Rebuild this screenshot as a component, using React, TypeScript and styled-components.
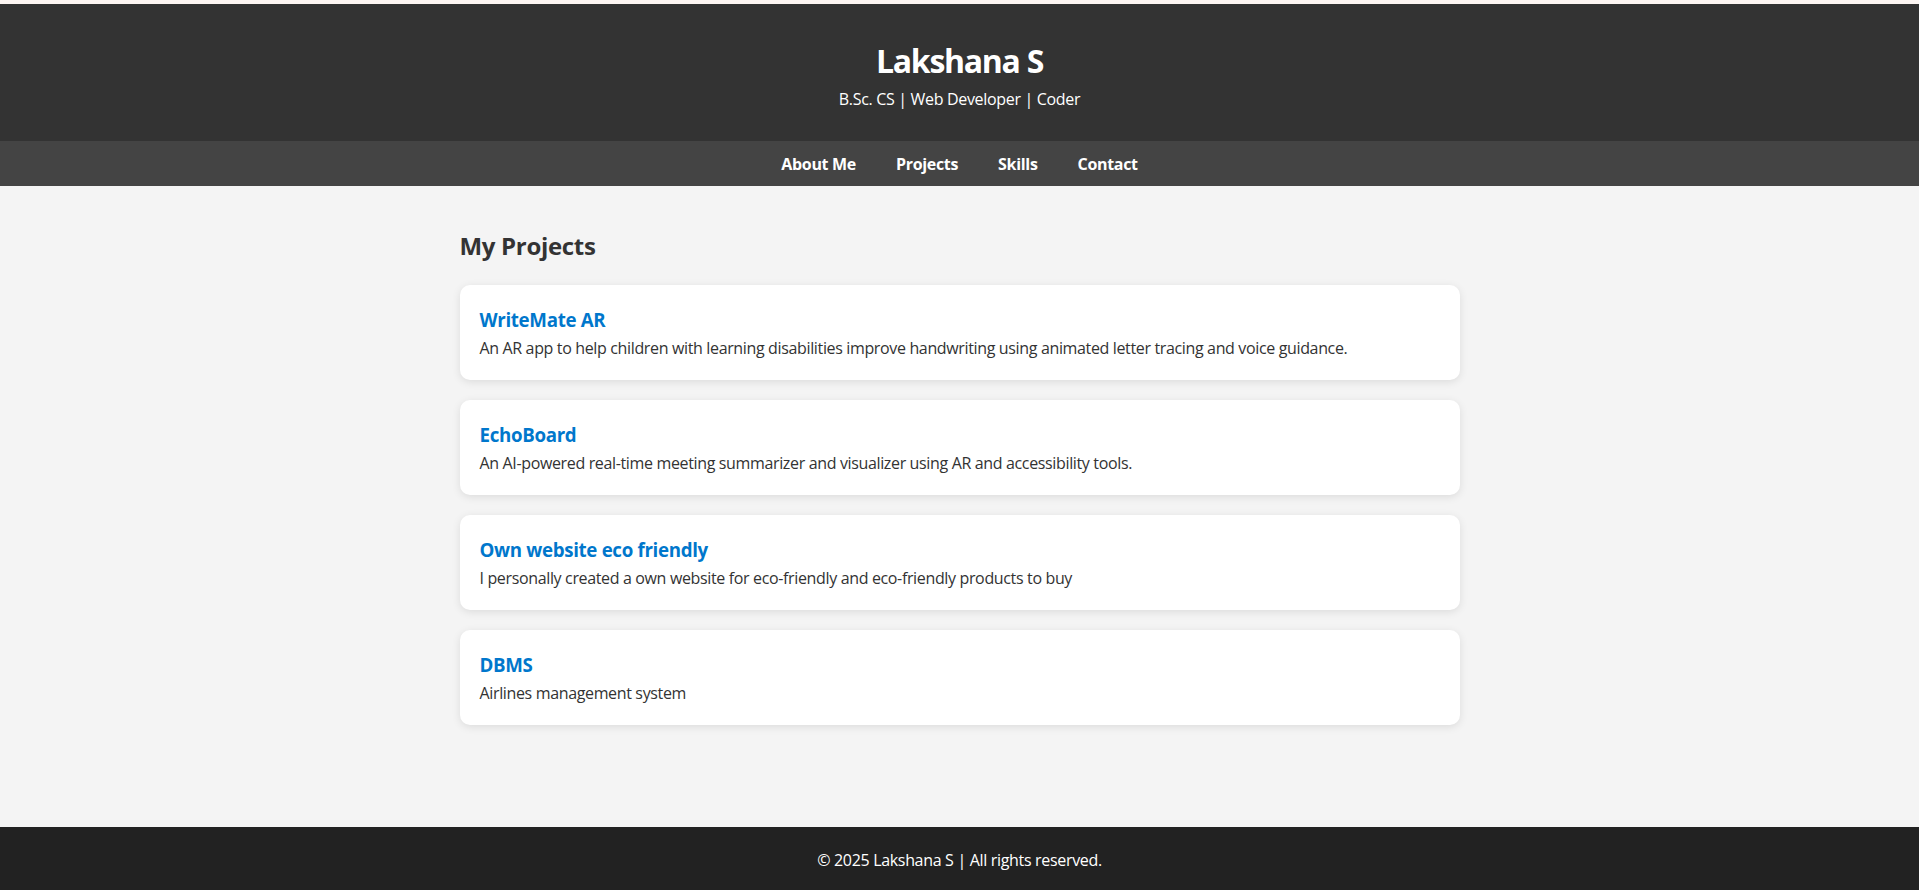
import React from "react";
import styled, { createGlobalStyle } from "styled-components";

const GlobalStyle = createGlobalStyle`
  html, body {
    margin: 0;
    padding: 0;
    background: #f4f4f4;
  }
  body {
    font-family: "Open Sans", "Noto Sans", Arial, sans-serif;
    color: #333;
    letter-spacing: -0.02em;
  }
  * { box-sizing: border-box; }
`;

const Page = styled.div`
  display: flex;
  flex-direction: column;
  min-height: 890px;
`;

const TopStrip = styled.div`
  height: 4px;
  background: #fdf6f3;
`;

const Header = styled.header`
  background: #333;
  color: #fff;
  text-align: center;
  padding: 36px 0 31px;
`;

const Name = styled.h1`
  margin: 0;
  font-size: 32px;
  line-height: 42px;
  font-weight: 700;
  letter-spacing: -0.04em;
`;

const Tagline = styled.p`
  margin: 7px 0 0;
  font-size: 16px;
  line-height: 21px;
`;

const Nav = styled.nav`
  background: #444;
  display: flex;
  justify-content: center;
  gap: 40px;
  padding: 13px 0 11px;
`;

const NavLink = styled.a`
  color: #fff;
  text-decoration: none;
  font-weight: 700;
  font-size: 16px;
  line-height: 21px;
  cursor: pointer;
`;

const Main = styled.main`
  flex: 1;
  padding: 44px 0 102px;
`;

const Container = styled.section`
  max-width: 1000px;
  margin: 0 auto;
`;

const SectionTitle = styled.h2`
  margin: 0 0 23px;
  font-size: 24px;
  line-height: 32px;
  font-weight: 700;
  color: #333;
`;

const CardList = styled.div`
  display: flex;
  flex-direction: column;
  gap: 20px;
`;

const Card = styled.article`
  background: #fff;
  border-radius: 10px;
  box-shadow: 0 2px 8px rgba(0, 0, 0, 0.1);
  padding: 22px 20px 21px;
`;

const CardTitle = styled.h3`
  margin: 0 0 6px;
  font-size: 18.72px;
  line-height: 25px;
  font-weight: 700;
  color: #0077cc;
`;

const CardText = styled.p`
  margin: 0;
  font-size: 16px;
  line-height: 21px;
  color: #333;
  letter-spacing: -0.022em;
`;

const Footer = styled.footer`
  background: #222;
  color: #fff;
  text-align: center;
  padding: 23px 0 19px;
  font-size: 16px;
  line-height: 21px;
`;

const projects = [
  {
    title: "WriteMate AR",
    text: "An AR app to help children with learning disabilities improve handwriting using animated letter tracing and voice guidance.",
  },
  {
    title: "EchoBoard",
    text: "An AI-powered real-time meeting summarizer and visualizer using AR and accessibility tools.",
  },
  {
    title: "Own website eco friendly",
    text: "I personally created a own website for eco-friendly and eco-friendly products to buy",
  },
  {
    title: "DBMS",
    text: "Airlines management system",
  },
];

export default function App() {
  return (
    <>
      <GlobalStyle />
      <Page>
        <TopStrip />
        <Header>
          <Name>Lakshana S</Name>
          <Tagline>B.Sc. CS | Web Developer | Coder</Tagline>
        </Header>
        <Nav>
          <NavLink>About Me</NavLink>
          <NavLink>Projects</NavLink>
          <NavLink>Skills</NavLink>
          <NavLink>Contact</NavLink>
        </Nav>
        <Main>
          <Container>
            <SectionTitle>My Projects</SectionTitle>
            <CardList>
              {projects.map((p) => (
                <Card key={p.title}>
                  <CardTitle>{p.title}</CardTitle>
                  <CardText>{p.text}</CardText>
                </Card>
              ))}
            </CardList>
          </Container>
        </Main>
        <Footer>© 2025 Lakshana S | All rights reserved.</Footer>
      </Page>
    </>
  );
}
